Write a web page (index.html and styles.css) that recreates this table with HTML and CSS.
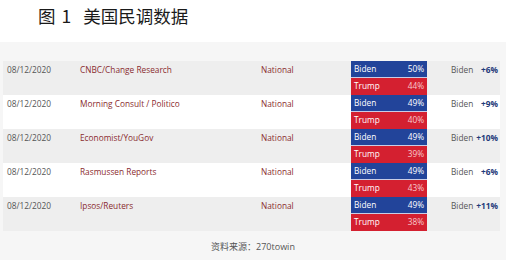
FILE: index.html
```html
<!DOCTYPE html>
<html>
<head>
<meta charset="utf-8">
<link rel="stylesheet" href="styles.css">
</head>
<body>
<div class="title"><span class="fig">图 1</span><span>美国民调数据</span></div>
<div class="panel">
  <div class="table">
    <div class="row alt">
      <div class="date">08/12/2020</div>
      <div class="poll">CNBC/Change Research</div>
      <div class="scope">National</div>
      <div class="bars"><div class="b"><span>Biden</span><span>50%</span></div><div class="t"><span>Trump</span><span>44%</span></div></div>
      <div class="lead">Biden</div>
      <div class="margin">+6%</div>
    </div>
    <div class="row">
      <div class="date">08/12/2020</div>
      <div class="poll">Morning Consult / Politico</div>
      <div class="scope">National</div>
      <div class="bars"><div class="b"><span>Biden</span><span>49%</span></div><div class="t"><span>Trump</span><span>40%</span></div></div>
      <div class="lead">Biden</div>
      <div class="margin">+9%</div>
    </div>
    <div class="row alt">
      <div class="date">08/12/2020</div>
      <div class="poll">Economist/YouGov</div>
      <div class="scope">National</div>
      <div class="bars"><div class="b"><span>Biden</span><span>49%</span></div><div class="t"><span>Trump</span><span>39%</span></div></div>
      <div class="lead">Biden</div>
      <div class="margin">+10%</div>
    </div>
    <div class="row">
      <div class="date">08/12/2020</div>
      <div class="poll">Rasmussen Reports</div>
      <div class="scope">National</div>
      <div class="bars"><div class="b"><span>Biden</span><span>49%</span></div><div class="t"><span>Trump</span><span>43%</span></div></div>
      <div class="lead">Biden</div>
      <div class="margin">+6%</div>
    </div>
    <div class="row alt">
      <div class="date">08/12/2020</div>
      <div class="poll">Ipsos/Reuters</div>
      <div class="scope">National</div>
      <div class="bars"><div class="b"><span>Biden</span><span>49%</span></div><div class="t"><span>Trump</span><span>38%</span></div></div>
      <div class="lead">Biden</div>
      <div class="margin">+11%</div>
    </div>
  </div>
  <div class="source">资料来源：270towin</div>
</div>
</body>
</html>
```
FILE: styles.css
```css
html, body {
  margin: 0;
  padding: 0;
  background: #ffffff;
}
body {
  width: 506px;
  height: 260px;
  overflow: hidden;
  font-family: "Open Sans", "Noto Sans CJK SC", sans-serif;
}
.title {
  height: 42px;
  box-sizing: border-box;
  padding: 5px 0 0 38px;
  font-family: "Noto Sans CJK SC", sans-serif;
  font-size: 17.5px;
  line-height: 22px;
  color: #1a1a1a;
  display: flex;
}
.title .fig {
  margin-right: 12px;
  word-spacing: 2px;
}
.panel {
  background: #f6f6f6;
  height: 218px;
  box-sizing: border-box;
  padding-top: 19px;
}
.table {
  margin: 0 6px 0 3px;
}
.row {
  display: grid;
  grid-template-columns: 73px 181px 90px 76px 24px 1fr auto;
  height: 34px;
  padding: 0 2px 0 4px;
  background: #ffffff;
  font-size: 8.3px;
  line-height: 17px;
}
.row.alt {
  background: #eeeeee;
}
.date {
  color: #555555;
}
.poll, .scope {
  color: #8a2b2e;
}
.bars {
  grid-column: 4;
  display: flex;
  flex-direction: column;
  color: #ffffff;
}
.bars .b, .bars .t {
  display: flex;
  justify-content: space-between;
  padding: 0 3px 0 3px;
  height: 16px;
  line-height: 16px;
}
.bars .b {
  background: #22449a;
  border-bottom: 1px solid #c9cde6;
}
.bars .t {
  background: #d42030;
  height: 17px;
}
.bars .t span:last-child {
  color: #f6c8cc;
}
.lead {
  grid-column: 6;
  color: #555555;
}
.margin {
  grid-column: 7;
  color: #1f3a7a;
  font-weight: bold;
  text-align: right;
}
.source {
  text-align: center;
  margin-top: 10px;
  font-size: 9px;
  line-height: 12px;
  color: #555555;
}
```
